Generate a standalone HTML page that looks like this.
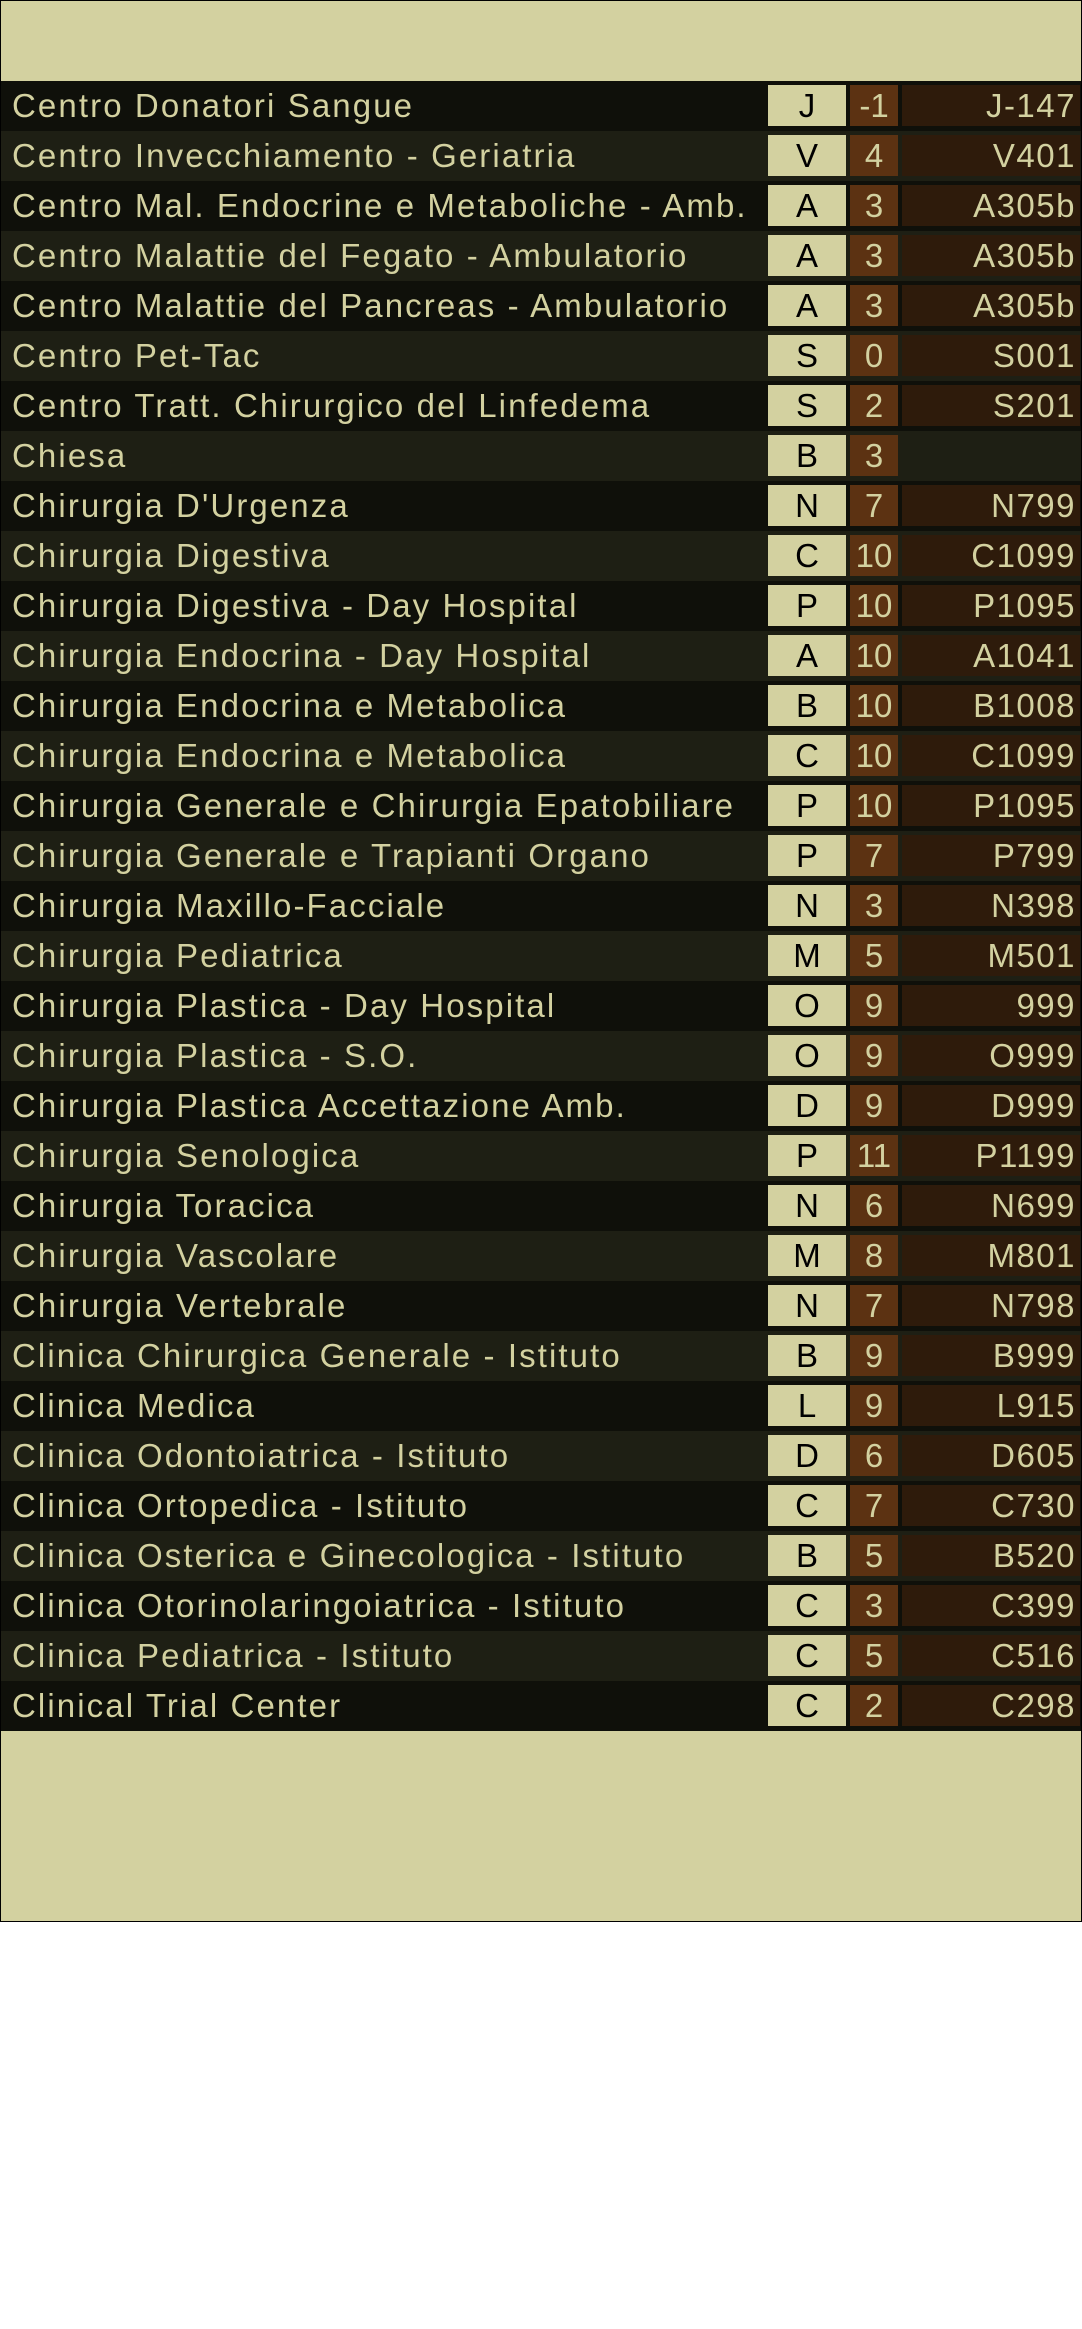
<!DOCTYPE html>
<html><head><style>
body{margin:0;background:#fff;width:1082px;height:2329px;font-family:"Liberation Sans",sans-serif;}
.panel{position:absolute;left:0;top:0;width:1080px;height:1920px;background:#d3d1a0;border:1px solid #000;}
.t{position:absolute;left:0;top:80px;width:1080px;}
.r{position:relative;height:50px;background:#0f100a;color:#d3d1a0;font-size:33px;letter-spacing:2.1px;}
.r:nth-child(even){background:#1e1f14;}
.n{position:absolute;left:11px;top:0;line-height:50px;white-space:nowrap;}
.l{position:absolute;left:767px;top:4px;width:78px;height:41px;background:#d3d1a0;color:#000;text-align:center;line-height:41px;letter-spacing:0;}
.k{position:absolute;left:849px;top:4px;width:48px;height:41px;background:#5c3212;text-align:center;line-height:41px;letter-spacing:0;}
.c{position:absolute;left:901px;top:4px;width:178px;height:41px;background:#2e1b0b;text-align:right;line-height:41px;box-sizing:border-box;padding-right:4px;letter-spacing:1.5px;}
</style></head><body>
<div class="panel"><div class="t">
<div class="r"><span class="n">Centro Donatori Sangue</span><span class="l">J</span><span class="k">-1</span><span class="c">J-147</span></div>
<div class="r"><span class="n">Centro Invecchiamento - Geriatria</span><span class="l">V</span><span class="k">4</span><span class="c">V401</span></div>
<div class="r"><span class="n">Centro Mal. Endocrine e Metaboliche - Amb.</span><span class="l">A</span><span class="k">3</span><span class="c">A305b</span></div>
<div class="r"><span class="n">Centro Malattie del Fegato - Ambulatorio</span><span class="l">A</span><span class="k">3</span><span class="c">A305b</span></div>
<div class="r"><span class="n">Centro Malattie del Pancreas - Ambulatorio</span><span class="l">A</span><span class="k">3</span><span class="c">A305b</span></div>
<div class="r"><span class="n">Centro Pet-Tac</span><span class="l">S</span><span class="k">0</span><span class="c">S001</span></div>
<div class="r"><span class="n">Centro Tratt. Chirurgico del Linfedema</span><span class="l">S</span><span class="k">2</span><span class="c">S201</span></div>
<div class="r"><span class="n">Chiesa</span><span class="l">B</span><span class="k">3</span><span class="c" style="background:#1e1f14"></span></div>
<div class="r"><span class="n">Chirurgia D'Urgenza</span><span class="l">N</span><span class="k">7</span><span class="c">N799</span></div>
<div class="r"><span class="n">Chirurgia Digestiva</span><span class="l">C</span><span class="k">10</span><span class="c">C1099</span></div>
<div class="r"><span class="n">Chirurgia Digestiva - Day Hospital</span><span class="l">P</span><span class="k">10</span><span class="c">P1095</span></div>
<div class="r"><span class="n">Chirurgia Endocrina - Day Hospital</span><span class="l">A</span><span class="k">10</span><span class="c">A1041</span></div>
<div class="r"><span class="n">Chirurgia Endocrina e Metabolica</span><span class="l">B</span><span class="k">10</span><span class="c">B1008</span></div>
<div class="r"><span class="n">Chirurgia Endocrina e Metabolica</span><span class="l">C</span><span class="k">10</span><span class="c">C1099</span></div>
<div class="r"><span class="n">Chirurgia Generale e Chirurgia Epatobiliare</span><span class="l">P</span><span class="k">10</span><span class="c">P1095</span></div>
<div class="r"><span class="n">Chirurgia Generale e Trapianti Organo</span><span class="l">P</span><span class="k">7</span><span class="c">P799</span></div>
<div class="r"><span class="n">Chirurgia Maxillo-Facciale</span><span class="l">N</span><span class="k">3</span><span class="c">N398</span></div>
<div class="r"><span class="n">Chirurgia Pediatrica</span><span class="l">M</span><span class="k">5</span><span class="c">M501</span></div>
<div class="r"><span class="n">Chirurgia Plastica - Day Hospital</span><span class="l">O</span><span class="k">9</span><span class="c">999</span></div>
<div class="r"><span class="n">Chirurgia Plastica - S.O.</span><span class="l">O</span><span class="k">9</span><span class="c">O999</span></div>
<div class="r"><span class="n">Chirurgia Plastica Accettazione Amb.</span><span class="l">D</span><span class="k">9</span><span class="c">D999</span></div>
<div class="r"><span class="n">Chirurgia Senologica</span><span class="l">P</span><span class="k">11</span><span class="c">P1199</span></div>
<div class="r"><span class="n">Chirurgia Toracica</span><span class="l">N</span><span class="k">6</span><span class="c">N699</span></div>
<div class="r"><span class="n">Chirurgia Vascolare</span><span class="l">M</span><span class="k">8</span><span class="c">M801</span></div>
<div class="r"><span class="n">Chirurgia Vertebrale</span><span class="l">N</span><span class="k">7</span><span class="c">N798</span></div>
<div class="r"><span class="n">Clinica Chirurgica Generale - Istituto</span><span class="l">B</span><span class="k">9</span><span class="c">B999</span></div>
<div class="r"><span class="n">Clinica Medica</span><span class="l">L</span><span class="k">9</span><span class="c">L915</span></div>
<div class="r"><span class="n">Clinica Odontoiatrica - Istituto</span><span class="l">D</span><span class="k">6</span><span class="c">D605</span></div>
<div class="r"><span class="n">Clinica Ortopedica - Istituto</span><span class="l">C</span><span class="k">7</span><span class="c">C730</span></div>
<div class="r"><span class="n">Clinica Osterica e Ginecologica - Istituto</span><span class="l">B</span><span class="k">5</span><span class="c">B520</span></div>
<div class="r"><span class="n">Clinica Otorinolaringoiatrica - Istituto</span><span class="l">C</span><span class="k">3</span><span class="c">C399</span></div>
<div class="r"><span class="n">Clinica Pediatrica - Istituto</span><span class="l">C</span><span class="k">5</span><span class="c">C516</span></div>
<div class="r"><span class="n">Clinical Trial Center</span><span class="l">C</span><span class="k">2</span><span class="c">C298</span></div>
</div></div>
</body></html>
